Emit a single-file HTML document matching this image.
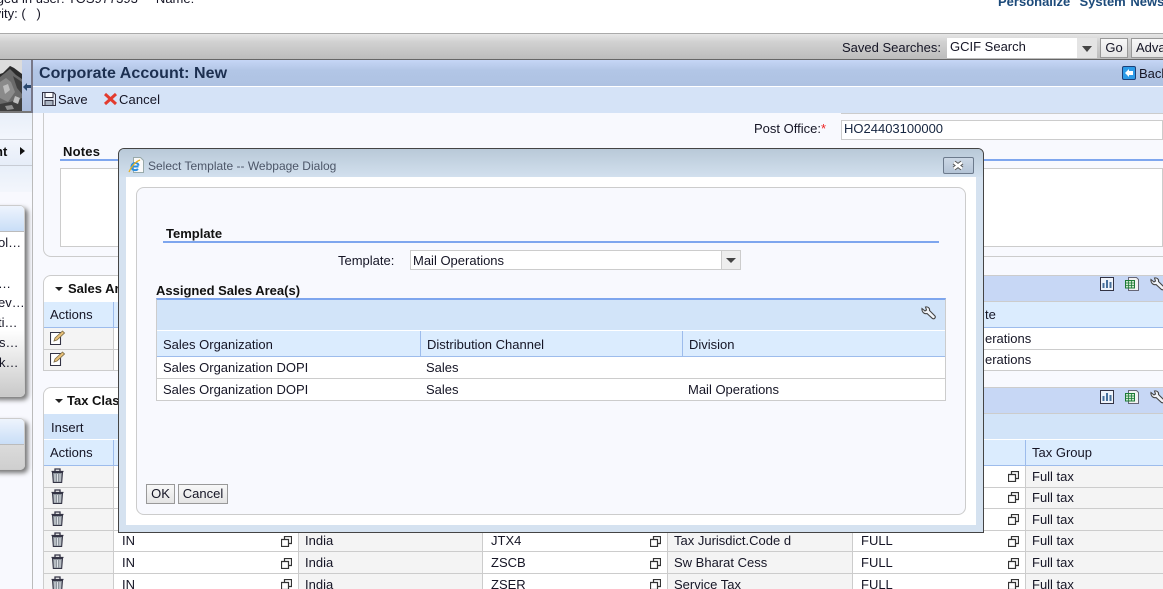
<!DOCTYPE html>
<html><head><meta charset="utf-8"><title>Corporate Account: New</title>
<style>
html,body{margin:0;padding:0;width:1163px;height:589px;overflow:hidden;background:#fff}
body{position:relative;font:13px "Liberation Sans",sans-serif;color:#111}
div,span,svg{position:absolute;box-sizing:border-box}
.t{white-space:nowrap;line-height:16px;color:#151525;margin-top:1px}
.b{font-weight:bold;color:#111}
.g{background:#f4f4f4}
.l{background:#ccc}
.btn{background:linear-gradient(#f8f8f8,#e4e4e4);border:1px solid #999;text-align:center;line-height:17px;color:#151525}
</style></head><body>
<svg width="0" height="0" style="left:0;top:0">
<defs>
<g id="copy"><path d="M3.500 3.500V.5h7v7h-3M.5 3.500h7v7h-7z" fill="#fff" stroke="#333" stroke-width="1.200"/></g>
<g id="trash"><path d="M.5 3.500h12M4 3V1h5v2" fill="none" stroke="#334" stroke-width="1.300"/><path d="M1.500 4.500h10l-.8 10H2.300z" fill="#8d949c" stroke="#334"/><path d="M4 6v7.500M6.500 6v7.500M9 6v7.500" stroke="#dfe3e8"/></g>
<g id="edit"><path d="M.5 2.500h10v12H.5z" fill="#fff" stroke="#334" stroke-width="1.100"/><path d="M4 11l1-3 7.500-7 2 2-7.500 7z" fill="#e8c078" stroke="#7a6a45" stroke-width=".8"/></g>
<g id="wr"><path d="M1 1.500l3 2.500 1.500-1-1-3C6.500-.5 9 .8 8.500 3.500L14 9c1 1.500-.8 3.500-2.500 2.500L6 6.500C3 7.500 .5 4.500 1 1.500z" transform="translate(0 1)" fill="#f2f5fa" stroke="#444" stroke-width="1.100"/></g>
<g id="chart"><rect x=".5" y=".5" width="13" height="13" fill="#eef3fb" stroke="#334"/><path d="M3.500 11V6M7 11V3M10.500 11V5" stroke="#47709c" stroke-width="2"/></g>
<g id="xl"><path d="M3.500.5h8l2 2v11h-10z" fill="#f2f2f2" stroke="#667"/><rect x=".5" y="3.500" width="9" height="7.500" fill="#cfe8cf" stroke="#1c7a35"/><path d="M1 6h8M1 8.500h8M3.500 4v7M6.500 4v7" stroke="#1c7a35" stroke-width=".8"/></g>
</defs></svg>

<!-- top header -->
<div class="t" style="left:-25px;top:-10px;white-space:pre">Logged in user: TOS977393     Name:</div>
<div class="t" style="left:-27px;top:5px;white-space:pre">Activity: (   )</div>
<div class="t" style="left:998px;top:-7px;font-weight:bold;color:#1c4a7a;white-space:pre;word-spacing:1px">Personalize  System News</div>

<!-- search bar -->
<div style="left:0;top:33px;width:1163px;height:27px;background:linear-gradient(#e6e6e6,#d2d2d2 30%,#bcbcbc);border-top:1px solid #aaa;border-bottom:1px solid #666"></div>
<div class="t" style="left:842px;top:39px">Saved Searches:</div>
<div style="left:947px;top:38px;width:150px;height:20px;background:#fff"></div>
<div class="t" style="left:950px;top:38px">GCIF Search</div>
<div style="left:1077px;top:38px;width:20px;height:20px;background:#e4e4e4"></div>
<div style="left:1082px;top:46px;width:0;height:0;border:5px solid transparent;border-top:6px solid #444;border-bottom:0"></div>
<div class="btn" style="left:1100px;top:38px;width:28px;height:20px">Go</div>
<div class="btn" style="left:1131px;top:38px;width:50px;height:20px;text-align:left;padding-left:4px">Advanced</div>

<!-- image and sidebar -->
<div style="left:0;top:60px;width:22px;height:52px;overflow:hidden;background:#6a6a6a">
<svg width="22" height="52" style="left:0;top:0"><path d="M0 0H22V14L18 11 14 8 10 6 7 9 3 13 0 14z" fill="#dcdcdc"/><path d="M0 14L3 13 7 9 10 6 14 8 18 11 22 14V19L16 15 10 9 5 13 0 17z" fill="#2c2c2c"/><path d="M0 22L6 18 11 22 15 32 8 42 0 38z" fill="#8a8a8a"/><path d="M13 16L22 22V34L17 28zM0 44L10 42 22 38V52H0z" fill="#3e3e3e"/><path d="M3 26L8 24 10 30 5 34zM15 36L20 38 18 44 13 42z" fill="#bdbdbd"/><path d="M5 46L12 45 14 49 7 50z" fill="#909090"/></svg></div>
<div style="left:22px;top:60px;width:10px;height:52px;background:linear-gradient(#c3d1ec,#aabcdc)"></div>
<div style="left:23px;top:83px;width:0;height:0;border:4px solid transparent;border-right:4px solid #2c4a70;border-left:0"></div>
<div style="left:26px;top:85px;width:5px;height:3px;background:#2c4a70"></div>
<div style="left:0;top:111px;width:32px;height:2px;background:#777"></div>
<div style="left:0;top:113px;width:32px;height:476px;background:#f8f9fe"></div>
<div style="left:0;top:113px;width:32px;height:26px;background:linear-gradient(#e8eff9,#f3f6fc)"></div>
<div style="left:0;top:139px;width:32px;height:1px;background:#c8ccd4"></div>
<div style="left:0;top:140px;width:32px;height:25px;background:linear-gradient(#f2f5fc,#e6edf8)"></div>
<div style="left:0;top:165px;width:32px;height:1px;background:#c8ccd4"></div>
<div style="left:0;top:166px;width:32px;height:26px;background:linear-gradient(#e8eff9,#f3f6fc)"></div>
<div class="t b" style="left:-5px;top:143px">nt</div>
<div style="left:20px;top:147px;width:0;height:0;border:4px solid transparent;border-left:5px solid #111;border-right:0"></div>
<div style="left:32px;top:60px;width:1px;height:529px;background:#bbb"></div>
<div style="left:31px;top:60px;width:2px;height:53px;background:#778"></div>

<!-- left panels -->
<div style="left:-10px;top:205px;width:35px;height:192px;border-radius:5px;border:1px solid #ccc;background:linear-gradient(#fff 65%,#c9c9c9);box-shadow:3px 3px 5px #777;overflow:hidden">
<div style="left:0;top:0;width:34px;height:26px;background:linear-gradient(#eef4fd,#c9def7);border-bottom:1px solid #bbb"></div></div>
<div class="t" style="left:-2px;top:234px">ol…</div>
<div class="t" style="left:-2px;top:275px">…</div>
<div class="t" style="left:-2px;top:294px">ev…</div>
<div class="t" style="left:-2px;top:314px">ti…</div>
<div class="t" style="left:-1px;top:334px">s…</div>
<div class="t" style="left:-1px;top:354px">k…</div>
<div style="left:-10px;top:418px;width:35px;height:52px;border-radius:5px;border:1px solid #ccc;background:linear-gradient(#e8e8e8,#cfcfcf);box-shadow:3px 3px 5px #777;overflow:hidden">
<div style="left:0;top:0;width:34px;height:26px;background:linear-gradient(#eef4fd,#c9def7);border-bottom:1px solid #bbb"></div></div>

<!-- page header -->
<div style="left:33px;top:60px;width:1130px;height:27px;background:linear-gradient(#c6d6f6,#b2c6e6 40%,#aec2e2);border-bottom:1px solid #fff"></div>
<div class="t" style="left:39px;top:63px;font-size:16px;line-height:19px;font-weight:bold;color:#1c2f50;letter-spacing:.05px">Corporate Account: New</div>
<div style="left:1122px;top:66px;width:14px;height:14px;background:#2d9be8;border:1px solid #1c3f78;border-radius:2px"></div>
<div style="left:1125px;top:69px;width:0;height:0;border:4px solid transparent;border-right:4px solid #fff;border-left:0"></div>
<div style="left:1129px;top:71px;width:4px;height:4px;background:#fff"></div>
<div class="t" style="left:1139px;top:65px">Back</div>
<div style="left:33px;top:87px;width:1130px;height:26px;background:#d5e3f7"></div>
<svg width="14" height="14" style="left:42px;top:92px"><path d="M.5.500h11l2 2v11H.500z" fill="#dfe6f0" stroke="#334"/><path d="M3 .500h8v5H3z" fill="#fff" stroke="#334"/><path d="M3 8.500h8v5H3z" fill="#aab4c2" stroke="#334"/></svg>
<div class="t" style="left:58px;top:91px">Save</div>
<svg width="15" height="14" style="left:103px;top:92px"><path d="M2 2l11 10M13 2L2 12" stroke="#e33b2e" stroke-width="3"/></svg>
<div class="t" style="left:119px;top:91px;letter-spacing:.1px">Cancel</div>

<!-- content -->
<div style="left:33px;top:113px;width:1130px;height:476px;background:#f8f9fe"></div>
<div style="left:43px;top:113px;width:1120px;height:144px;border-left:1px solid #ccc;border-bottom:1px solid #ccc;border-radius:0 0 0 8px"></div>
<div class="t" style="left:754px;top:120px">Post Office:<span style="position:static;color:#e22">*</span></div>
<div style="left:841px;top:113px;width:322px;height:1px;background:#ccc"></div>
<div style="left:841px;top:120px;width:322px;height:20px;background:#fff;border:1px solid #ccc"></div>
<div class="t" style="left:844px;top:120px;color:#152540">HO24403100000</div>
<div class="t b" style="left:63px;top:143px;letter-spacing:.2px">Notes</div>
<div style="left:60px;top:159px;width:1103px;height:2px;background:#7ea6ee"></div>
<div style="left:60px;top:168px;width:1103px;height:79px;background:#fff;border:1px solid #ccc"></div>

<!-- sales area block -->
<div style="left:43px;top:275px;width:1120px;height:96px;background:#fff;border:1px solid #ccc;border-right:0;border-radius:8px 0 0 0"></div>
<div style="left:983px;top:275px;width:180px;height:27px;background:#c7d7f5;border-top:1px solid #ccc;border-bottom:1px solid #ccc"></div>
<div style="left:55px;top:287px;width:0;height:0;border:4px solid transparent;border-top:4px solid #222;border-bottom:0"></div>
<div class="t b" style="left:68px;top:280px">Sales Area</div>
<div style="left:44px;top:302px;width:1119px;height:26px;background:#dbecfe;border-bottom:1px solid #9dbcec"></div>
<div style="left:113px;top:302px;width:1px;height:26px;background:#9dbcec"></div>
<div class="t" style="left:50px;top:306px">Actions</div>
<div class="t" style="left:985px;top:306px">te</div>
<div class="g" style="left:44px;top:328px;width:69px;height:42px"></div>
<div class="l" style="left:44px;top:349px;width:1119px;height:1px"></div>
<div class="l" style="left:113px;top:328px;width:1px;height:43px"></div>
<svg width="15" height="15" style="left:50px;top:330px"><use href="#edit"/></svg>
<svg width="15" height="15" style="left:50px;top:351px"><use href="#edit"/></svg>
<div class="t" style="left:985px;top:330px">erations</div>
<div class="t" style="left:985px;top:351px">erations</div>
<svg width="14" height="14" style="left:1100px;top:277px"><use href="#chart"/></svg>
<svg width="14" height="14" style="left:1125px;top:277px"><use href="#xl"/></svg>
<svg width="15" height="14" style="left:1150px;top:277px"><use href="#wr"/></svg>

<!-- tax block -->
<div style="left:43px;top:387px;width:1120px;height:202px;background:#fff;border:1px solid #ccc;border-right:0;border-bottom:0;border-radius:8px 0 0 0"></div>
<div style="left:983px;top:387px;width:180px;height:27px;background:#c7d7f5;border-top:1px solid #ccc;border-bottom:1px solid #ccc"></div>
<div style="left:55px;top:399px;width:0;height:0;border:4px solid transparent;border-top:4px solid #222;border-bottom:0"></div>
<div class="t b" style="left:67px;top:392px">Tax Classification</div>
<svg width="14" height="14" style="left:1100px;top:390px"><use href="#chart"/></svg>
<svg width="14" height="14" style="left:1125px;top:390px"><use href="#xl"/></svg>
<svg width="15" height="14" style="left:1150px;top:390px"><use href="#wr"/></svg>
<div style="left:44px;top:414px;width:1119px;height:25px;background:#d2e4f9"></div>
<div class="t" style="left:51px;top:419px">Insert</div>
<div style="left:44px;top:440px;width:1119px;height:26px;background:#dbecfe;border-bottom:1px solid #9dbcec"></div>
<div style="left:113px;top:440px;width:1px;height:26px;background:#9dbcec"></div>
<div style="left:1025px;top:440px;width:1px;height:26px;background:#9dbcec"></div>
<div class="t" style="left:50px;top:444px">Actions</div>
<div class="t" style="left:1032px;top:444px">Tax Group</div>
<!-- columns -->
<div class="g" style="left:44px;top:466px;width:69px;height:123px"></div>
<div class="g" style="left:299px;top:466px;width:183px;height:123px"></div>
<div class="g" style="left:668px;top:466px;width:184px;height:123px"></div>
<div class="g" style="left:1026px;top:466px;width:137px;height:123px"></div>
<div class="l" style="left:113px;top:466px;width:1px;height:123px"></div>
<div class="l" style="left:298px;top:466px;width:1px;height:123px"></div>
<div class="l" style="left:482px;top:466px;width:1px;height:123px"></div>
<div class="l" style="left:667px;top:466px;width:1px;height:123px"></div>
<div class="l" style="left:852px;top:466px;width:1px;height:123px"></div>
<div class="l" style="left:1025px;top:466px;width:1px;height:123px"></div>
<div class="l" style="left:44px;top:487px;width:1119px;height:1px"></div>
<div class="l" style="left:44px;top:508px;width:1119px;height:1px"></div>
<div class="l" style="left:44px;top:530px;width:1119px;height:1px"></div>
<div class="l" style="left:44px;top:551px;width:1119px;height:1px"></div>
<div class="l" style="left:44px;top:573px;width:1119px;height:1px"></div>
<svg width="13" height="15" style="left:51px;top:468px"><use href="#trash"/></svg>
<svg width="13" height="15" style="left:51px;top:489px"><use href="#trash"/></svg>
<svg width="13" height="15" style="left:51px;top:511px"><use href="#trash"/></svg>
<svg width="13" height="15" style="left:51px;top:532px"><use href="#trash"/></svg>
<svg width="13" height="15" style="left:51px;top:554px"><use href="#trash"/></svg>
<svg width="13" height="15" style="left:51px;top:576px"><use href="#trash"/></svg>
<div class="t" style="left:1032px;top:468px">Full tax</div>
<div class="t" style="left:1032px;top:489px">Full tax</div>
<div class="t" style="left:1032px;top:511px">Full tax</div>
<div class="t" style="left:1032px;top:532px">Full tax</div>
<div class="t" style="left:1032px;top:554px">Full tax</div>
<div class="t" style="left:1032px;top:576px">Full tax</div>
<svg width="11" height="11" style="left:1008px;top:471px"><use href="#copy"/></svg>
<svg width="11" height="11" style="left:1008px;top:492px"><use href="#copy"/></svg>
<svg width="11" height="11" style="left:1008px;top:514px"><use href="#copy"/></svg>
<svg width="11" height="11" style="left:1008px;top:536px"><use href="#copy"/></svg>
<svg width="11" height="11" style="left:1008px;top:558px"><use href="#copy"/></svg>
<svg width="11" height="11" style="left:1008px;top:579px"><use href="#copy"/></svg>
<div class="t" style="left:122px;top:532px">IN</div><div class="t" style="left:305px;top:532px">India</div><div class="t" style="left:491px;top:532px">JTX4</div><div class="t" style="left:674px;top:532px">Tax Jurisdict.Code d</div><div class="t" style="left:861px;top:532px">FULL</div>
<div class="t" style="left:122px;top:554px">IN</div><div class="t" style="left:305px;top:554px">India</div><div class="t" style="left:491px;top:554px">ZSCB</div><div class="t" style="left:674px;top:554px">Sw Bharat Cess</div><div class="t" style="left:861px;top:554px">FULL</div>
<div class="t" style="left:122px;top:576px">IN</div><div class="t" style="left:305px;top:576px">India</div><div class="t" style="left:491px;top:576px">ZSER</div><div class="t" style="left:674px;top:576px">Service Tax</div><div class="t" style="left:861px;top:576px">FULL</div>
<svg width="11" height="11" style="left:281px;top:536px"><use href="#copy"/></svg>
<svg width="11" height="11" style="left:281px;top:558px"><use href="#copy"/></svg>
<svg width="11" height="11" style="left:281px;top:579px"><use href="#copy"/></svg>
<svg width="11" height="11" style="left:650px;top:536px"><use href="#copy"/></svg>
<svg width="11" height="11" style="left:650px;top:558px"><use href="#copy"/></svg>
<svg width="11" height="11" style="left:650px;top:579px"><use href="#copy"/></svg>

<!-- dialog -->
<div style="left:118px;top:148px;width:866px;height:385px;background:#d5e2f0;border:1px solid #444;border-radius:6px 6px 0 0"></div>
<div style="left:119px;top:149px;width:864px;height:28px;background:linear-gradient(#b9c9d8,#d2e0ee);border-radius:5px 5px 0 0"></div>
<svg width="17" height="17" style="left:128px;top:157px"><path d="M5.500.500h7l3 3v12h-10z" fill="#fafafa" stroke="#9aa"/><path d="M10.500 9.500H3.500C3.500 5 10.500 5 10.500 8.500M10 12C8 14 3.500 13.500 3.500 9.500" fill="none" stroke="#2b8fe0" stroke-width="2"/><path d="M1 15C3 10 7 5 12 3" fill="none" stroke="#e8b020" stroke-width="1.300"/></svg>
<div class="t" style="left:148px;top:157px;font-size:12px;color:#4c5668">Select Template -- Webpage Dialog</div>
<div style="left:943px;top:157px;width:31px;height:17px;background:linear-gradient(#ccd8e6,#b4c4d6);border:1px solid #6c7a8c;border-radius:2px"></div>
<svg width="14" height="11" style="left:951px;top:160px"><path d="M3 2.500l8 6M11 2.500l-8 6" stroke="#555" stroke-width="4.500"/><path d="M3 2.500l8 6M11 2.500l-8 6" stroke="#fff" stroke-width="2.500"/></svg>
<div style="left:126px;top:177px;width:850px;height:348px;background:#fff"></div>
<div style="left:136px;top:187px;width:830px;height:328px;background:#f8f9fe;border:1px solid #ccc;border-radius:8px"></div>

<div class="t b" style="left:166px;top:225px">Template</div>
<div style="left:163px;top:241px;width:776px;height:2px;background:#7ea6ee"></div>
<div class="t" style="left:338px;top:252px">Template:</div>
<div style="left:410px;top:250px;width:331px;height:20px;background:#fff;border:1px solid #ccc"></div>
<div class="t" style="left:413px;top:252px">Mail Operations</div>
<div style="left:721px;top:251px;width:19px;height:18px;background:#eee;border-left:1px solid #ccc"></div>
<div style="left:726px;top:258px;width:0;height:0;border:5px solid transparent;border-top:5px solid #444;border-bottom:0"></div>
<div class="t b" style="left:156px;top:282px">Assigned Sales Area(s)</div>
<div style="left:156px;top:298px;width:790px;height:103px;background:#fff;border:1px solid #ccc;border-top:2px solid #7ea6ee"></div>
<div style="left:157px;top:300px;width:788px;height:30px;background:#d2e4f9"></div>
<svg width="15" height="14" style="left:921px;top:306px"><use href="#wr"/></svg>
<div style="left:157px;top:331px;width:788px;height:26px;background:#dbecfe;border-bottom:1px solid #9dbcec"></div>
<div style="left:420px;top:331px;width:1px;height:25px;background:#9dbcec"></div>
<div style="left:682px;top:331px;width:1px;height:25px;background:#9dbcec"></div>
<div class="t" style="left:163px;top:336px">Sales Organization</div>
<div class="t" style="left:427px;top:336px">Distribution Channel</div>
<div class="t" style="left:689px;top:336px">Division</div>
<div class="l" style="left:157px;top:378px;width:788px;height:1px"></div>
<div class="t" style="left:163px;top:359px">Sales Organization DOPI</div>
<div class="t" style="left:426px;top:359px">Sales</div>
<div class="t" style="left:163px;top:381px">Sales Organization DOPI</div>
<div class="t" style="left:426px;top:381px">Sales</div>
<div class="t" style="left:688px;top:381px">Mail Operations</div>
<div class="btn" style="left:146px;top:484px;width:29px;height:20px">OK</div>
<div class="btn" style="left:178px;top:484px;width:50px;height:20px">Cancel</div>
</body></html>
